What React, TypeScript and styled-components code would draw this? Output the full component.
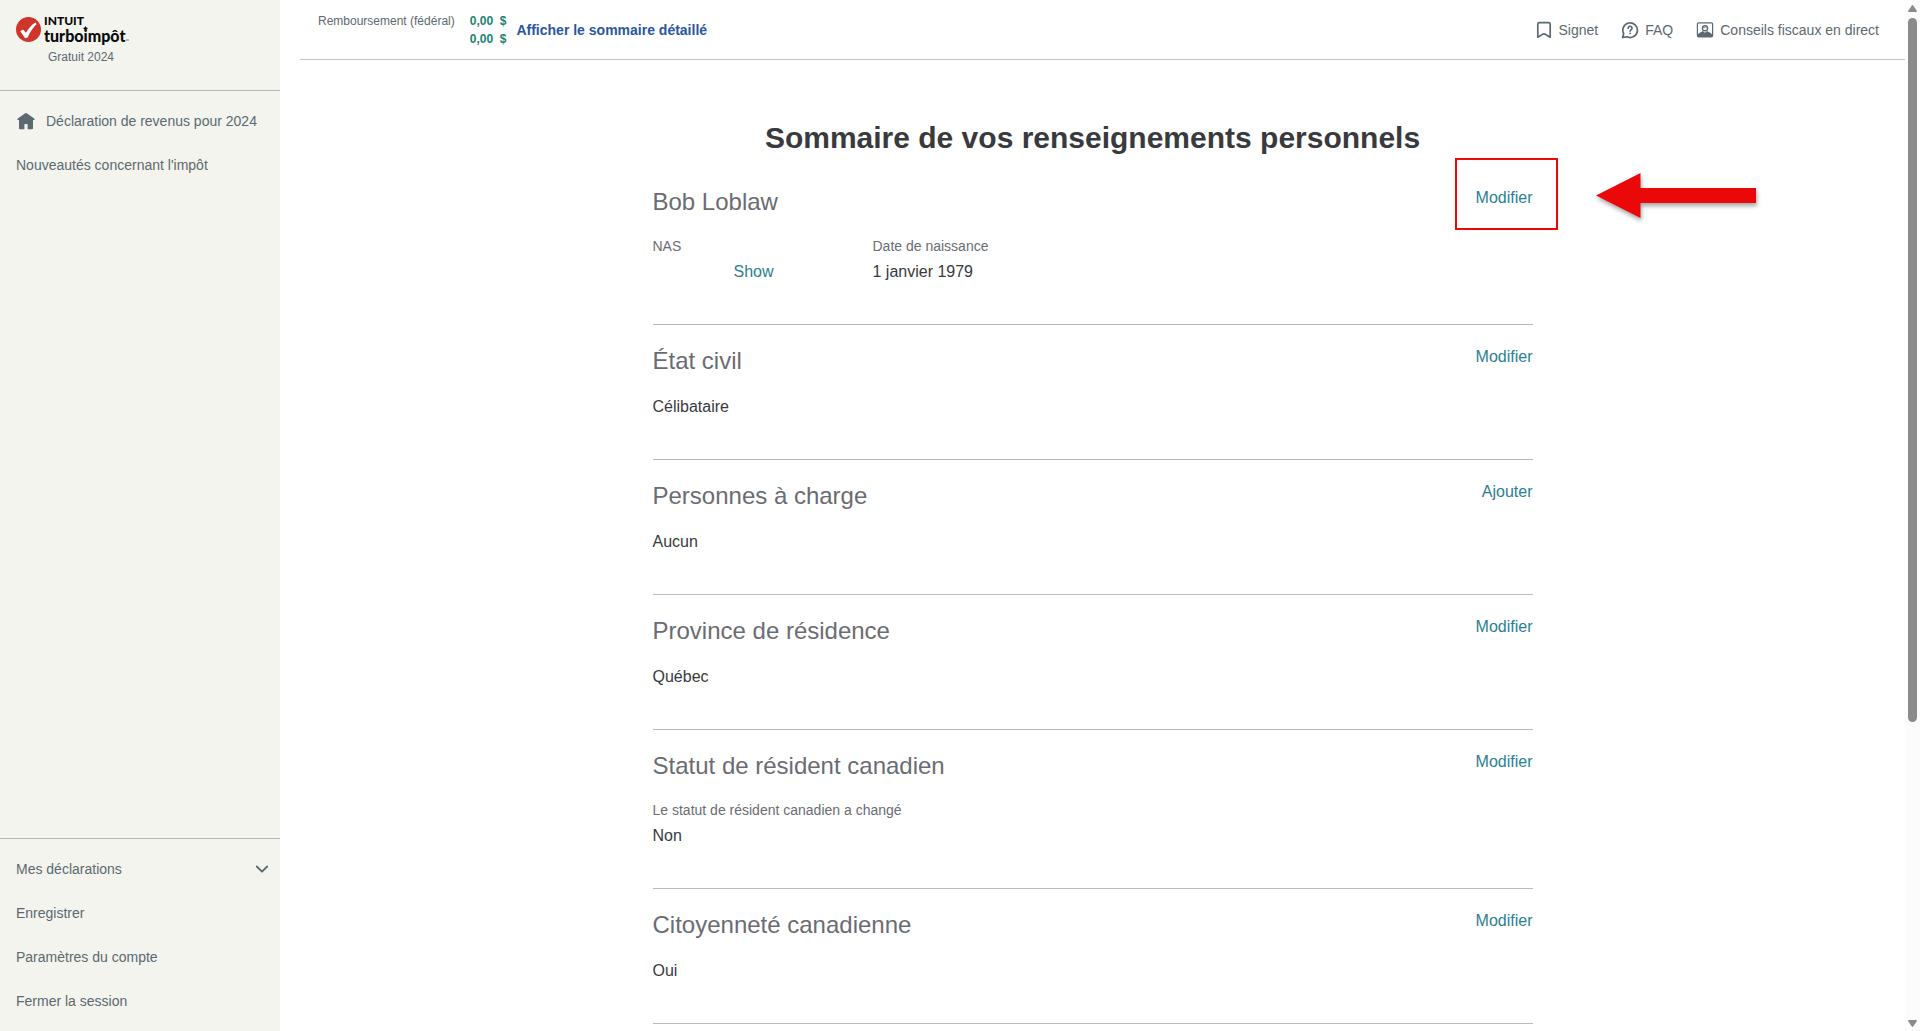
import React from "react";
import styled, { createGlobalStyle } from "styled-components";

const color = {
  sidebar: "#f3f4ee",
  rule: "#adbbc1",
  topRule: "#bac7d0",
  sectionRule: "#babbc0",
  nav: "#5c6970",
  title: "#393a3d",
  heading: "#6b6c72",
  text: "#393a3d",
  link: "#2a7f92",
  blue: "#2a56a2",
  green: "#23826f",
  red: "#ea0808",
  brand: "#cf352a",
  thumb: "#8b8b8b",
};

const GlobalStyle = createGlobalStyle`
  *, *::before, *::after { box-sizing: border-box; }
  body {
    margin: 0;
    background: #fff;
    color: ${color.text};
    font-family: "Liberation Sans", Arial, Helvetica, sans-serif;
    font-size: 16px;
    line-height: 24px;
  }
  h1, h2, p, ul, dl, dd { margin: 0; padding: 0; }
  ul { list-style: none; }
  a { color: inherit; text-decoration: none; }
  button { border: 0; padding: 0; background: none; font: inherit; color: inherit; cursor: pointer; }
  svg { display: block; flex: none; }
`;

const Shell = styled.div`
  display: grid;
  grid-template-columns: 280px minmax(0, 1fr) 15px;
  height: 100vh;
  overflow: hidden;
`;

const Sidebar = styled.aside`
  display: flex;
  flex-direction: column;
  background: ${color.sidebar};
  color: ${color.nav};
`;

const Brand = styled.div`
  padding: 12px 16px 24px;
  border-bottom: 1px solid ${color.rule};
`;

const Logo = styled.a`
  display: flex;
  align-items: center;
  gap: 3px;
  height: 34px;
  color: #0b0b0b;
`;

const LogoWords = styled.span`
  position: relative;
  display: flex;
  flex-direction: column;
  gap: 1px;
  padding-top: 1px;
`;

const LogoTop = styled.span`
  font: 900 12px/12px Lato, sans-serif;
`;

const LogoName = styled.span`
  font: 900 16px/16px Lato, sans-serif;
`;

const MapleLeaf = styled.svg`
  position: absolute;
  left: 39px;
  top: 12px;
`;

const Trademark = styled.svg`
  position: absolute;
  left: 100%;
  bottom: 3px;
`;

const Edition = styled.p`
  padding: 2px 0 0 32px;
  font-size: 12px;
  line-height: 18px;
`;

const NavList = styled.ul<{ $bottom?: boolean }>`
  padding: 8px 0;
  margin-top: ${(p) => (p.$bottom ? "auto" : "0")};
  border-top: ${(p) => (p.$bottom ? `1px solid ${color.rule}` : "0")};
`;

const navItem = `
  display: flex;
  align-items: center;
  width: 100%;
  height: 44px;
  padding: 0 10px 0 16px;
  font-size: 14px;
  line-height: 20px;
`;

const NavLink = styled.a`
  ${navItem}
  gap: 10px;
`;

const NavButton = styled.button`
  && {
    ${navItem}
    justify-content: space-between;
  }
`;

const Page = styled.div`
  overflow-y: auto;
  scrollbar-width: none;
`;

const TopBar = styled.header`
  display: flex;
  justify-content: space-between;
  align-items: center;
  margin-left: 20px;
  padding: 12px 26px 11px 18px;
  border-bottom: 1px solid ${color.topRule};
`;

const Refund = styled.div`
  display: flex;
  gap: 10px;
  align-items: center;
`;

const RefundList = styled.dl`
  display: grid;
  grid-template-columns: auto auto;
  column-gap: 15px;
  font-size: 12px;
  line-height: 18px;
  color: ${color.nav};
`;

const Amount = styled.dd`
  grid-column: 2;
  font-weight: 700;
  color: ${color.green};
  white-space: pre;
`;

const DetailLink = styled.a`
  && {
    color: ${color.blue};
  }
  font-size: 14px;
  font-weight: 700;
`;

const Tools = styled.nav`
  display: flex;
  gap: 23px;
  color: ${color.nav};
  font-size: 14px;
`;

const Tool = styled.a`
  display: flex;
  align-items: center;
  gap: 6px;
`;

const Content = styled.main`
  max-width: 880px;
  margin: 0 auto;
  padding: 58px 0 40px;
`;

const Title = styled.h1`
  margin-bottom: 8px;
  font-size: 30px;
  line-height: 40px;
  text-align: center;
  color: ${color.title};
`;

const Section = styled.section`
  padding: 20px 0 40px;
  border-bottom: 1px solid ${color.sectionRule};
`;

const SectionHead = styled.div`
  display: flex;
  justify-content: space-between;
  align-items: flex-start;
  margin-bottom: 18px;
`;

const SectionTitle = styled.h2`
  font-size: 24px;
  line-height: 32px;
  font-weight: 400;
  color: ${color.heading};
`;

const Action = styled.a`
  position: relative;
  && {
    color: ${color.link};
  }
`;

const Fields = styled.div`
  display: grid;
  grid-template-columns: repeat(4, 1fr);
`;

const Field = styled.div<{ $wide?: boolean }>`
  grid-column: ${(p) => (p.$wide ? "1 / -1" : "auto")};
`;

const FieldLabel = styled.p`
  && {
    margin-bottom: 4px;
  }
  font-size: 14px;
  line-height: 20px;
  color: ${color.heading};
`;

const ShowButton = styled.button`
  && {
    display: block;
    margin-left: 81px;
    color: ${color.link};
  }
`;

const Highlight = styled.span`
  position: absolute;
  inset: -28px -25px -20px -21px;
  border: 2px solid ${color.red};
  pointer-events: none;
`;

const ArrowMark = styled.svg`
  position: absolute;
  left: calc(100% + 57px);
  top: -19px;
  overflow: visible;
  filter: drop-shadow(1px 3px 2px rgba(0, 0, 0, 0.35));
  pointer-events: none;
`;

const ScrollBar = styled.div`
  display: flex;
  flex-direction: column;
  align-items: center;
  justify-content: space-between;
  padding: 5px 0 4px;
  background: #fcfcfc;
`;

const Track = styled.div`
  flex: 1;
  width: 9px;
  margin: 6px 0 5px;
`;

const Thumb = styled.div`
  height: calc(100% * 12 / 17);
  border-radius: 5px;
  background: ${color.thumb};
`;

const HomeIcon = () => (
  <svg width="20" height="20" viewBox="0 0 20 20" fill={color.nav} aria-hidden="true">
    <path d="M9.200 2.200a1.300 1.300 0 0 1 1.600 0l7.400 5.200c.7.600.4 1.600-.4 1.600H17v8.200a1 1 0 0 1-1 1h-4.400v-4.400a.8.8 0 0 0-.8-.8H9.200a.8.8 0 0 0-.8.8v4.400H4a1 1 0 0 1-1-1V9h-.8c-.8 0-1.100-1-.4-1.600z" />
  </svg>
);

const ChevronIcon = () => (
  <svg width="16" height="16" viewBox="0 0 16 16" fill="none" stroke={color.nav} strokeWidth="1.800" strokeLinecap="round" strokeLinejoin="round" aria-hidden="true">
    <path d="M2.800 5.500 8 10.700l5.200-5.200" />
  </svg>
);

const BookmarkIcon = () => (
  <svg width="18" height="18" viewBox="0 0 18 18" fill="none" stroke={color.nav} strokeWidth="1.700" strokeLinejoin="round" aria-hidden="true">
    <path d="M4.300 1.700h9.400c.9 0 1.500.6 1.500 1.500v13l-4.600-2.800a3 3 0 0 0-3.200 0l-4.600 2.800v-13c0-.9.600-1.500 1.500-1.500z" />
  </svg>
);

const FaqIcon = () => (
  <svg width="18" height="18" viewBox="0 0 18 18" fill="none" stroke={color.nav} strokeWidth="1.700" strokeLinecap="round" strokeLinejoin="round" aria-hidden="true">
    <path d="M2.700 12.700A7.300 7.300 0 1 1 6 15.800L1.600 16.500z" />
    <path d="M7.200 7.200a1.900 1.900 0 1 1 2.900 1.600c-.7.400-1 .7-1 1.300" />
    <circle cx="9.100" cy="12.300" r=".5" fill={color.nav} strokeWidth=".8" />
  </svg>
);

const AdviceIcon = () => (
  <svg width="18" height="18" viewBox="0 0 18 18" fill="none" stroke={color.nav} aria-hidden="true">
    <rect x="1.400" y="1.800" width="15.200" height="14" rx="1.200" strokeWidth="1.200" />
    <path d="M1.500 16v-2.500l3-2.300c1.200-.6 1.900-.8 2.300-1.300L9 11.800l2.200-1.900c.4.500 1.100.7 2.300 1.300l3 2.300V16z" fill={color.nav} stroke="none" />
    <circle cx="9" cy="7.300" r="2.600" strokeWidth="1.300" />
    <path d="M6.600 6.500c1.600 0 2.600-.3 3.200-1 .3.600.7.900 1.600 1" strokeWidth="1" />
  </svg>
);

const CheckBadge = () => (
  <svg width="25" height="25" viewBox="0 0 25 25" aria-hidden="true">
    <circle cx="12.500" cy="12.500" r="12.500" fill={color.brand} />
    <path d="M4.300 14.300 7 12.400l3 3.400C12.400 11.600 15.400 8.200 19.300 5.600l1.400 1.500c-4 3.800-6.800 8.200-9 13.400l-2.600.7z" fill="#fff" />
  </svg>
);

const sections = [
  { title: "État civil", action: "Modifier", value: "Célibataire" },
  { title: "Personnes à charge", action: "Ajouter", value: "Aucun" },
  { title: "Province de résidence", action: "Modifier", value: "Québec" },
  {
    title: "Statut de résident canadien",
    action: "Modifier",
    label: "Le statut de résident canadien a changé",
    value: "Non",
  },
  { title: "Citoyenneté canadienne", action: "Modifier", value: "Oui" },
];

export default function App() {
  return (
    <>
      <GlobalStyle />
      <Shell>
        <Sidebar>
          <Brand>
            <Logo href="#">
              <CheckBadge />
              <LogoWords>
                <LogoTop>INTUIT</LogoTop>
                <LogoName>turboimpôt</LogoName>
                <MapleLeaf width="5" height="5" viewBox="0 0 5 5" aria-hidden="true">
                  <path d="M2.500 0 3.300 1.600 5 2 3.500 3.500 2.800 3.700V5h-.6V3.700L1.500 3.500 0 2l1.700-.4z" fill="#0b0b0b" />
                </MapleLeaf>
                <Trademark width="4" height="2" viewBox="0 0 4 2" aria-hidden="true">
                  <path d="M1 1h3" stroke="#777" />
                </Trademark>
              </LogoWords>
            </Logo>
            <Edition>Gratuit 2024</Edition>
          </Brand>
          <NavList>
            <li>
              <NavLink href="#">
                <HomeIcon />
                Déclaration de revenus pour 2024
              </NavLink>
            </li>
            <li>
              <NavLink href="#">Nouveautés concernant l'impôt</NavLink>
            </li>
          </NavList>
          <NavList $bottom>
            <li>
              <NavButton type="button">
                Mes déclarations
                <ChevronIcon />
              </NavButton>
            </li>
            <li>
              <NavLink href="#">Enregistrer</NavLink>
            </li>
            <li>
              <NavLink href="#">Paramètres du compte</NavLink>
            </li>
            <li>
              <NavLink href="#">Fermer la session</NavLink>
            </li>
          </NavList>
        </Sidebar>

        <Page>
          <TopBar>
            <Refund>
              <RefundList>
                <dt>Remboursement (fédéral)</dt>
                <Amount>{"0,00\u00a0 $"}</Amount>
                <Amount>{"0,00\u00a0 $"}</Amount>
              </RefundList>
              <DetailLink href="#">Afficher le sommaire détaillé</DetailLink>
            </Refund>
            <Tools>
              <Tool href="#">
                <BookmarkIcon />
                Signet
              </Tool>
              <Tool href="#">
                <FaqIcon />
                FAQ
              </Tool>
              <Tool href="#">
                <AdviceIcon />
                Conseils fiscaux en direct
              </Tool>
            </Tools>
          </TopBar>

          <Content>
            <Title>Sommaire de vos renseignements personnels</Title>

            <Section>
              <SectionHead>
                <SectionTitle>Bob Loblaw</SectionTitle>
                <Action href="#">
                  Modifier
                  <Highlight />
                  <ArrowMark width="172" height="56" viewBox="0 0 172 56" aria-hidden="true">
                    <path d="M6 28.500 50.500 6v15H166v15H50.500v15z" fill={color.red} />
                  </ArrowMark>
                </Action>
              </SectionHead>
              <Fields>
                <Field>
                  <FieldLabel>NAS</FieldLabel>
                  <ShowButton type="button">Show</ShowButton>
                </Field>
                <Field>
                  <FieldLabel>Date de naissance</FieldLabel>
                  <p>1 janvier 1979</p>
                </Field>
              </Fields>
            </Section>

            {sections.map((s) => (
              <Section key={s.title}>
                <SectionHead>
                  <SectionTitle>{s.title}</SectionTitle>
                  <Action href="#">{s.action}</Action>
                </SectionHead>
                <Fields>
                  <Field $wide>
                    {s.label && <FieldLabel>{s.label}</FieldLabel>}
                    <p>{s.value}</p>
                  </Field>
                </Fields>
              </Section>
            ))}
          </Content>
        </Page>

        <ScrollBar aria-hidden="true">
          <svg width="9" height="7" viewBox="0 0 9 7" fill={color.thumb}>
            <path d="M3.800.5a.9.9 0 0 1 1.400 0L8.900 6q.2 1-.7 1H.8q-.9 0-.7-1z" />
          </svg>
          <Track>
            <Thumb />
          </Track>
          <svg width="9" height="7" viewBox="0 0 9 7" fill={color.thumb}>
            <path d="M3.800 6.500a.9.9 0 0 0 1.400 0L8.900 1q.2-1-.7-1H.8Q-.1 0 .1 1z" />
          </svg>
        </ScrollBar>
      </Shell>
    </>
  );
}
